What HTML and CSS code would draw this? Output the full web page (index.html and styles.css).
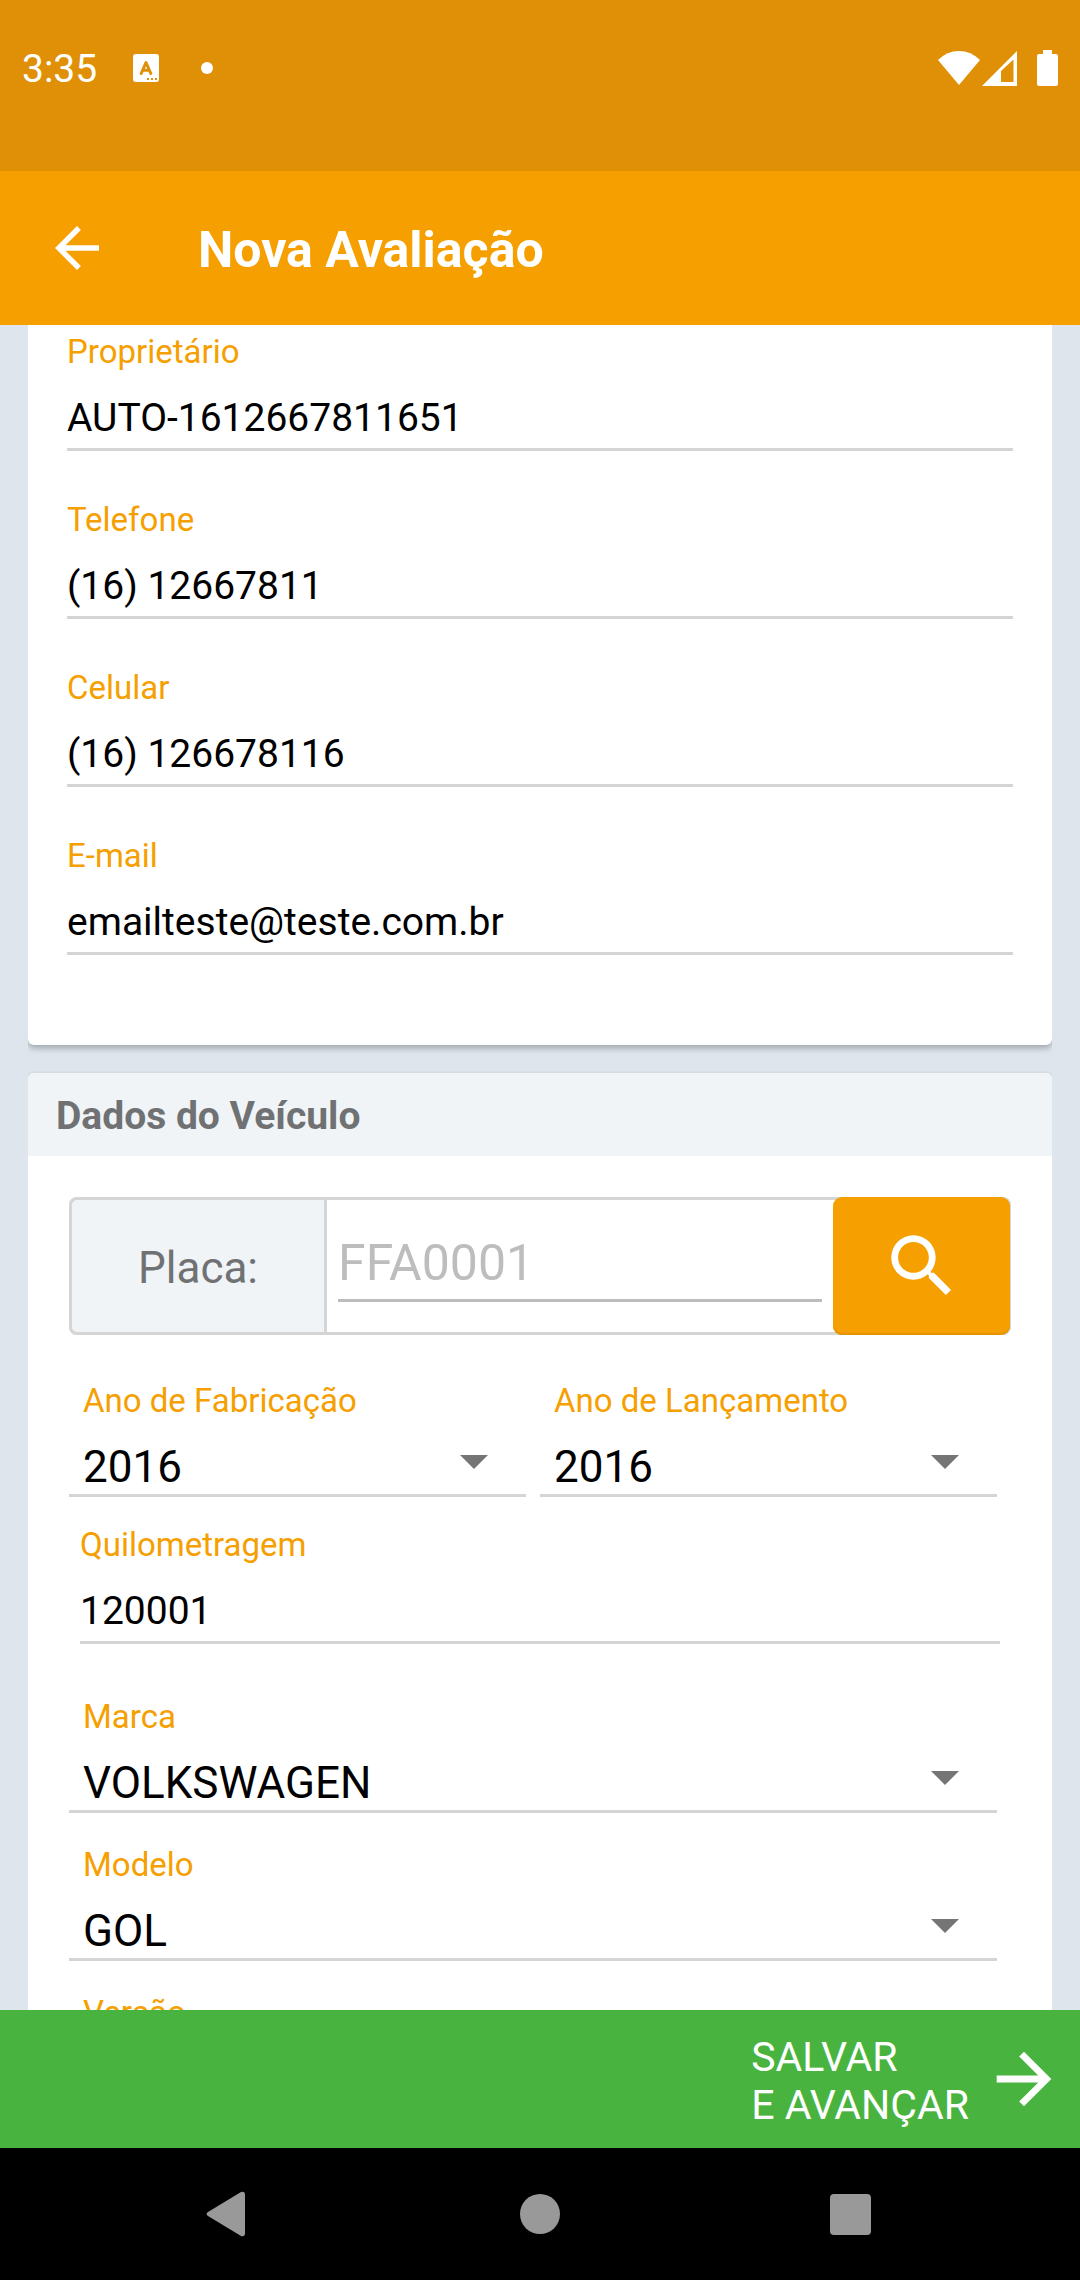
FILE: index.html
```html
<!DOCTYPE html>
<html lang="pt-BR">
<head>
<meta charset="utf-8">
<meta name="viewport" content="width=device-width, initial-scale=1">
<title>Nova Avaliação</title>
<link rel="stylesheet" href="styles.css">
</head>
<body>
<div class="app">
  <div class="status">
    <span class="status-time">3:35</span>
    <svg class="status-keyboard" width="26" height="28" viewBox="0 0 26 28" aria-hidden="true">
      <rect width="26" height="28" rx="3" fill="#fff"/>
      <path d="M8.200 19.500L13 8.500L17.800 19.500M9.800 16.200H16.200" fill="none" stroke="#df9007" stroke-width="3" stroke-linecap="round" stroke-linejoin="round"/>
      <path d="M14 24h2v2h-2zM18 24h2v2h-2zM22 24h2v2h-2z" fill="#df9007"/>
    </svg>
    <span class="status-dot"></span>
    <svg class="status-wifi" width="42" height="36" viewBox="0 0 42 36" aria-hidden="true">
      <path d="M0 10Q9 1 21 1T42 10L21 35Z" fill="#fff"/>
    </svg>
    <svg class="status-signal" width="35" height="36" viewBox="0 0 35 36" aria-hidden="true">
      <path fill-rule="evenodd" d="M0 36L35 1V36ZM19 21V32H31.500V9.500Z" fill="#fff"/>
    </svg>
    <svg class="status-battery" width="21" height="36" viewBox="0 0 21 36" aria-hidden="true">
      <path d="M6 0H15V4H19Q21 4 21 6V34Q21 36 19 36H2Q0 36 0 34V6Q0 4 2 4H6Z" fill="#fff"/>
    </svg>
  </div>

  <header class="bar">
    <button class="bar-back" type="button" aria-label="Voltar">
      <svg width="66" height="66" viewBox="0 0 24 24"><path d="M20 11H7.830l5.590-5.590L12 4l-8 8 8 8 1.410-1.410L7.830 13H20z" fill="#fff"/></svg>
    </button>
    <h1 class="bar-title">Nova Avaliação</h1>
  </header>

  <main class="content">
    <section class="card card-owner">
      <div class="field">
        <label for="owner">Proprietário</label>
        <input id="owner" type="text" value="AUTO-1612667811651">
      </div>
      <div class="field">
        <label for="phone">Telefone</label>
        <input id="phone" type="tel" value="(16) 12667811">
      </div>
      <div class="field">
        <label for="mobile">Celular</label>
        <input id="mobile" type="tel" value="(16) 126678116">
      </div>
      <div class="field">
        <label for="email">E-mail</label>
        <input id="email" type="email" value="emailteste@teste.com.br">
      </div>
    </section>

    <section class="card card-vehicle">
      <h2 class="card-title">Dados do Veículo</h2>
      <div class="vehicle">
        <div class="plate">
          <label class="plate-label" for="plate">Placa:</label>
          <div class="plate-entry"><input id="plate" type="text" placeholder="FFA0001"></div>
          <button class="plate-search" type="button" aria-label="Buscar placa">
            <svg width="82" height="82" viewBox="0 0 24 24"><path d="M15.500 14h-.790l-.280-.270A6.471 6.471 0 0 0 16 9.500 6.500 6.500 0 1 0 9.500 16c1.610 0 3.090-.590 4.230-1.570l.270.280v.790l5 4.990L20.490 19l-4.990-5zm-6 0C7.010 14 5 11.990 5 9.500S7.010 5 9.500 5 14 7.010 14 9.500 11.990 14 9.500 14z" fill="#fff"/></svg>
          </button>
        </div>

        <div class="years">
          <div class="choice">
            <label for="built">Ano de Fabricação</label>
            <div class="choice-box">
              <select id="built"><option>2016</option></select>
              <svg class="caret" width="28" height="14" viewBox="0 0 28 14" aria-hidden="true"><path d="M0 0H28L14 14Z"/></svg>
            </div>
          </div>
          <div class="choice">
            <label for="launched">Ano de Lançamento</label>
            <div class="choice-box">
              <select id="launched"><option>2016</option></select>
              <svg class="caret" width="28" height="14" viewBox="0 0 28 14" aria-hidden="true"><path d="M0 0H28L14 14Z"/></svg>
            </div>
          </div>
        </div>

        <div class="field field-mileage">
          <label for="mileage">Quilometragem</label>
          <input id="mileage" type="text" inputmode="numeric" value="120001">
        </div>

        <div class="choices">
          <div class="choice">
            <label for="make">Marca</label>
            <div class="choice-box">
              <select id="make"><option>VOLKSWAGEN</option></select>
              <svg class="caret" width="28" height="14" viewBox="0 0 28 14" aria-hidden="true"><path d="M0 0H28L14 14Z"/></svg>
            </div>
          </div>
          <div class="choice">
            <label for="model">Modelo</label>
            <div class="choice-box">
              <select id="model"><option>GOL</option></select>
              <svg class="caret" width="28" height="14" viewBox="0 0 28 14" aria-hidden="true"><path d="M0 0H28L14 14Z"/></svg>
            </div>
          </div>
          <div class="choice">
            <label for="version">Versão</label>
            <div class="choice-box">
              <select id="version"><option></option></select>
              <svg class="caret" width="28" height="14" viewBox="0 0 28 14" aria-hidden="true"><path d="M0 0H28L14 14Z"/></svg>
            </div>
          </div>
        </div>
      </div>
    </section>
  </main>

  <button class="save" type="button">
    <span class="save-text">SALVAR<br>E AVANÇAR</span>
    <svg width="82" height="82" viewBox="0 0 24 24" aria-hidden="true"><path d="M12 4l-1.410 1.410L16.170 11H4v2h12.170l-5.580 5.590L12 20l8-8z" fill="#fff"/></svg>
  </button>

  <nav class="system">
    <button type="button" aria-label="Voltar ao anterior">
      <svg width="46" height="46" viewBox="0 0 46 46"><path d="M3 21L36 1Q40 0 40 4V42Q40 46 36 45L3 25Q0 23 3 21Z"/></svg>
    </button>
    <button type="button" aria-label="Início">
      <svg width="46" height="46" viewBox="0 0 46 46"><circle cx="23" cy="23" r="20"/></svg>
    </button>
    <button type="button" aria-label="Recentes">
      <svg width="46" height="46" viewBox="0 0 46 46"><rect x="1" y="3" width="41" height="41" rx="4"/></svg>
    </button>
  </nav>
</div>
</body>
</html>
```
FILE: styles.css
```css
:root {
  --accent: #f5a000;
  --line: #d5d5d5;
  --soft: #f0f4f7;
}

* {
  box-sizing: border-box;
}

body {
  margin: 0;
  background: #dee5ed;
  font-family: Roboto, sans-serif;
  color: #000;
}

button,
input,
select {
  margin: 0;
  padding: 0;
  border: 0;
  border-radius: 0;
  background: none;
  color: inherit;
  font-family: inherit;
  outline: 0;
}

h1,
h2 {
  margin: 0;
}

svg {
  display: block;
}

.app {
  display: flex;
  flex-direction: column;
  height: 100vh;
}

/* Status bar */
.status {
  display: flex;
  align-items: center;
  padding: 42px 22px 78px;
  background: #df9007;
  color: #fff;
}

.status-time {
  padding-top: 4px;
  font-size: 39px;
  line-height: 47px;
}

.status-keyboard {
  margin-left: 36px;
}

.status-dot {
  width: 12px;
  height: 12px;
  margin-left: 42px;
  border-radius: 50%;
  background: #fff;
}

.status-wifi {
  margin-left: auto;
}

.status-signal {
  margin-left: 2px;
}

.status-battery {
  margin-left: 20px;
}

/* Title bar */
.bar {
  display: flex;
  align-items: center;
  gap: 88px;
  padding: 44px;
  background: var(--accent);
  color: #fff;
}

.bar-title {
  padding-top: 4px;
  font-size: 50px;
  line-height: 58px;
  font-weight: 700;
}

/* Scrolling form */
.content {
  flex: 1;
  min-height: 0;
  padding: 0 28px;
  overflow-y: auto;
  scrollbar-width: none;
}

.card {
  border-radius: 6px;
  background: #fff;
  box-shadow: 0 3px 6px rgba(60, 70, 70, 0.4);
  clip-path: inset(-2px 0 -12px 0);
}

.card-owner {
  display: flex;
  flex-direction: column;
  gap: 49px;
  margin-bottom: 28px;
  padding: 7px 39px 90px;
  border-radius: 0 0 6px 6px;
}

.card-title {
  padding: 20px 28px 17px;
  border-radius: 6px 6px 0 0;
  background: var(--soft);
  color: #6f7173;
  font-size: 39px;
  line-height: 46px;
  font-weight: 700;
}

.field,
.choice {
  display: flex;
  flex-direction: column;
}

.field label,
.choice label {
  color: var(--accent);
  font-size: 33px;
  line-height: 40px;
}

.field {
  gap: 22px;
}

.field input {
  width: 100%;
  height: 57px;
  padding-bottom: 6px;
  border-bottom: 3px solid var(--line);
  font-size: 39px;
  line-height: 48px;
}

.vehicle {
  padding: 41px 41px 32px;
}

/* Plate lookup */
.plate {
  display: flex;
  height: 138px;
  border-radius: 8px;
  background: #fff;
  box-shadow: inset 0 0 0 3px var(--line);
}

.plate-label {
  display: flex;
  align-items: center;
  justify-content: center;
  width: 258px;
  padding-top: 3px;
  border: 3px solid var(--line);
  border-radius: 8px 0 0 8px;
  background: var(--soft);
  color: #6f7173;
  font-size: 44px;
  line-height: 52px;
}

.plate-entry {
  flex: 1;
  min-width: 0;
  padding: 35px 11px;
}

.plate-entry input {
  width: 100%;
  height: 70px;
  padding-bottom: 5px;
  border-bottom: 3px solid #bdbdbd;
  font-size: 50px;
  line-height: 58px;
}

.plate-entry input::placeholder {
  color: #bdbdbd;
  opacity: 1;
}

.plate-search {
  display: flex;
  align-items: center;
  justify-content: center;
  width: 177px;
  margin-right: 1px;
  border-radius: 9px;
  background: var(--accent);
  box-shadow: inset 0 -2px 0 #e39400;
}

/* Drop-downs */
.years {
  display: grid;
  grid-template-columns: 1fr 1fr;
  gap: 14px;
  margin: 46px 14px 28px 0;
}

.field-mileage {
  margin: 0 11px 53px;
}

.choices {
  display: flex;
  flex-direction: column;
  gap: 32px;
  margin-right: 14px;
}

.choice {
  gap: 20px;
}

.choice label {
  padding-left: 14px;
}

.choice-box {
  display: grid;
  align-items: center;
  border-bottom: 3px solid var(--line);
}

.choice-box select,
.caret {
  grid-area: 1 / 1;
}

.choice-box select {
  width: 100%;
  height: 53px;
  padding: 0 80px 1px 14px;
  appearance: none;
  font-size: 44px;
  line-height: 52px;
}

.caret {
  justify-self: end;
  margin: 0 38px 12px 0;
  fill: #757575;
  pointer-events: none;
}

/* Save action */
.save {
  display: flex;
  align-items: center;
  justify-content: flex-end;
  gap: 14px;
  padding: 19px 15px;
  background: #48b43f;
  color: #fff;
  font-size: 41px;
  line-height: 48px;
  text-align: left;
}

.save-text {
  padding-top: 4px;
}

/* System navigation */
.system {
  display: grid;
  grid-template-columns: repeat(3, 1fr);
  padding: 0 72px;
  background: #000;
}

.system button {
  display: flex;
  align-items: center;
  justify-content: center;
  height: 132px;
}

.system svg {
  fill: #999;
}
```
